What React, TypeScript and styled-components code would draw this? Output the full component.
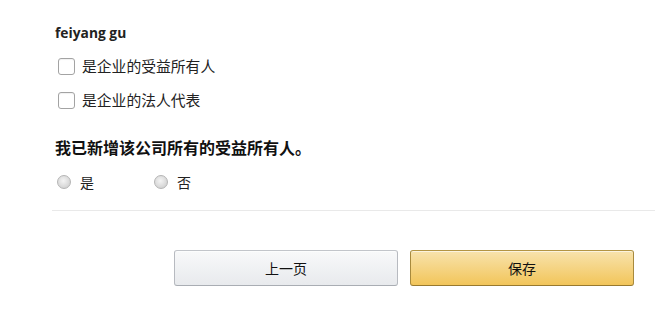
import styled, { createGlobalStyle } from "styled-components";

const GlobalStyle = createGlobalStyle`
  html, body {
    margin: 0;
    padding: 0;
    background: #ffffff;
  }
  body {
    font-family: "Open Sans", "Noto Sans CJK SC", sans-serif;
    color: #111111;
  }
`;

const Page = styled.div`
  width: 655px;
  height: 329px;
  overflow: hidden;
  padding-top: 24px;
  box-sizing: border-box;
`;

const Section = styled.div`
  padding-left: 55px;
  display: flex;
  flex-direction: column;
`;

const OwnerName = styled.div`
  font-family: "Open Sans", sans-serif;
  font-weight: 700;
  font-size: 13.8px;
  line-height: 18px;
  color: #222;
`;

const CheckList = styled.div`
  display: flex;
  flex-direction: column;
  gap: 16px;
  margin-top: 15px;
  padding-left: 3px;
`;

const CheckRow = styled.label`
  display: flex;
  align-items: center;
  gap: 7px;
  font-family: "Noto Sans CJK SC", sans-serif;
  font-size: 14.8px;
  line-height: 18px;
  color: #222;
`;

const CheckBox = styled.span`
  width: 15px;
  height: 15px;
  border: 1px solid #a3a3a3;
  border-radius: 3px;
  background: #fff;
  box-shadow: inset 0 1px 1px rgba(0, 0, 0, 0.06);
`;

const Question = styled.div`
  margin-top: 28px;
  font-family: "Noto Sans CJK SC", sans-serif;
  font-weight: 700;
  font-size: 16px;
  line-height: 20px;
  color: #111;
`;

const RadioGroup = styled.div`
  display: flex;
  gap: 60px;
  margin-top: 16px;
  padding-left: 2px;
`;

const RadioRow = styled.label`
  display: flex;
  align-items: center;
  gap: 9px;
  font-family: "Noto Sans CJK SC", sans-serif;
  font-size: 14px;
  line-height: 18px;
  color: #222;
`;

const RadioDot = styled.span`
  width: 12px;
  height: 12px;
  border-radius: 50%;
  border: 1px solid #b5b5b5;
  background: radial-gradient(circle at 45% 40%, #f4f4f4 0%, #dcdcdc 55%, #c8c8c8 100%);
`;

const Divider = styled.hr`
  margin: 19px 0 0 52px;
  border: none;
  border-top: 1px solid #e9e9e9;
  height: 0;
`;

const ButtonRow = styled.div`
  display: flex;
  gap: 12px;
  margin-top: 39px;
  padding-left: 174px;
`;

const Button = styled.button<{ $primary?: boolean }>`
  width: 224px;
  height: 36px;
  border-radius: 3px;
  border: 1px solid;
  border-color: ${(p) => (p.$primary ? "#b39544 #a88a3d #98792f" : "#c2c5ca #b7bac0 #a9adb3")};
  background: ${(p) =>
    p.$primary
      ? "linear-gradient(to bottom, #f8e3ad, #f2c55a)"
      : "linear-gradient(to bottom, #f8f9fa, #e8eaed)"};
  box-shadow: 0 1px 0 rgba(255, 255, 255, 0.6) inset;
  font-family: "Noto Sans CJK SC", sans-serif;
  font-size: 14px;
  color: #111;
  cursor: pointer;
`;

export default function App() {
  return (
    <Page>
      <GlobalStyle />
      <Section>
        <OwnerName>feiyang gu</OwnerName>
        <CheckList>
          <CheckRow>
            <CheckBox />
            是企业的受益所有人
          </CheckRow>
          <CheckRow>
            <CheckBox />
            是企业的法人代表
          </CheckRow>
        </CheckList>
        <Question>我已新增该公司所有的受益所有人。</Question>
        <RadioGroup>
          <RadioRow>
            <RadioDot />是
          </RadioRow>
          <RadioRow>
            <RadioDot />否
          </RadioRow>
        </RadioGroup>
      </Section>
      <Divider />
      <ButtonRow>
        <Button>上一页</Button>
        <Button $primary>保存</Button>
      </ButtonRow>
    </Page>
  );
}
